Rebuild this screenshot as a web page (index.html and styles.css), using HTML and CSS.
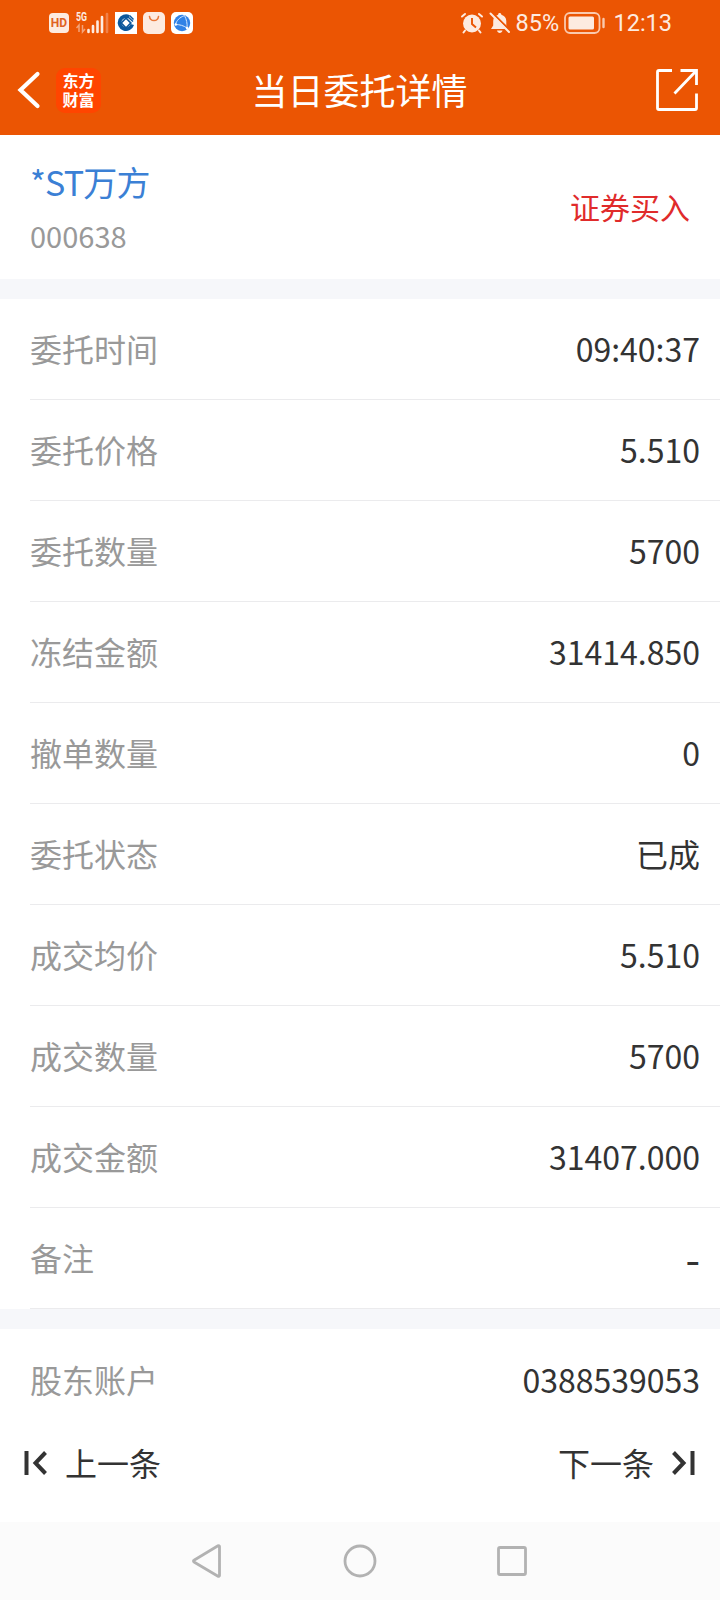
FILE: index.html
```html
<!DOCTYPE html>
<html lang="zh-CN">
<head>
    <meta charset="UTF-8">
    <meta name="viewport" content="width=device-width, initial-scale=1.0">
    <title>当日委托详情</title>
    <link rel="stylesheet" href="styles.css">
</head>
<body>
    <header class="header">
        <!-- Status bar -->
        <div class="status">
            <div class="status-left">
                <span class="hd">HD</span>
                <svg class="signal" width="34" height="24" viewBox="0 0 34 24">
                    <text x="0" y="10" class="signal-text" textLength="11" lengthAdjust="spacingAndGlyphs">5G</text>
                    <path d="M3 21V14l-2.500 3M6.500 14v7l2.500-3" fill="none" stroke="#f3a47b" stroke-width="1.500"/>
                    <path d="M12.500 21v-2M17 21v-6M21.500 21V10.500M26 21V6" stroke="#fdebe0" stroke-width="2.600" stroke-linecap="round"/>
                    <path d="M31 21V3" stroke="#f08149" stroke-width="2.600" stroke-linecap="round"/>
                </svg>
                <svg class="app-bank" width="22" height="22" viewBox="0 0 22 22">
                    <path d="M0 0h22v22H0z" fill="#fff"/>
                    <path d="M14 4.800A6.500 6.500 0 1 0 17.300 12.500" fill="none" stroke="#0b579c" stroke-width="3.600"/>
                    <path d="M11 5l6 6-6 6-6-6z" fill="#0b579c"/>
                    <path d="M11 7.300l3.700 3.700-3.700 3.700L7.300 11z" fill="#fff"/>
                    <path d="M12.500 4.500l5.500 5M14.500 3.500l4 4" stroke="#0b579c" stroke-width="1.500"/>
                </svg>
                <svg class="app-store" width="22" height="22" viewBox="0 0 22 22">
                    <rect width="22" height="22" rx="5" fill="#fdebe0"/>
                    <path d="M6.500 4.500c.8 5.400 8.200 5.400 9 0" fill="none" stroke="#e9783a" stroke-width="1.600" stroke-linecap="round"/>
                </svg>
                <svg class="app-globe" width="22" height="22" viewBox="0 0 22 22">
                    <rect width="22" height="22" rx="5" fill="#fff"/>
                    <circle cx="11" cy="11" r="8.200" fill="#3182e6"/>
                    <path d="M13.500 3.500c-5 2-8 5-9 9M4.500 12.500c4 0 8 1 11.500 3.500M13.500 3.500c2 4 3 8 2.500 12.500" fill="none" stroke="#d5e8ff" stroke-width="1"/>
                    <circle cx="4.800" cy="12.500" r="1.200" fill="#fff"/>
                    <circle cx="16" cy="16" r="1.200" fill="#fff"/>
                </svg>
            </div>
            <div class="status-right">
                <svg class="alarm" width="24" height="22" viewBox="0 0 24 22">
                    <circle cx="12" cy="11.500" r="9" fill="#fdebe0"/>
                    <path d="M2 4.500L5 2M22 4.500L19 2M5 18.500l-1.500 2M19 18.500l1.500 2" stroke="#fdebe0" stroke-width="2" stroke-linecap="round"/>
                    <path d="M12 6v6l4 3.500" fill="none" stroke="#eb5503" stroke-width="1.900"/>
                </svg>
                <svg class="bell" width="22" height="22" viewBox="0 0 22 22">
                    <path d="M10.500 1c1.100 0 1.800.7 1.900 1.700 3 .8 4.900 3.200 4.900 6.300v4.500l2.200 3.500H2l2.200-3.500V9c0-3.100 1.900-5.500 4.900-6.300.1-1 .6-1.700 1.400-1.700zM8 18.500h5.500c-.5 3.300-5 3.300-5.500 0z" fill="#fdebe0"/>
                    <path d="M3 .5l19 19" stroke="#eb5503" stroke-width="2"/>
                    <path d="M1.500 1.500l18.500 18.500" stroke="#fdebe0" stroke-width="2" stroke-linecap="round"/>
                </svg>
                <span class="battery-text">85%</span>
                <svg class="battery" width="42" height="22" viewBox="0 0 42 22">
                    <rect x="1" y="1" width="34.500" height="20" rx="5" fill="none" stroke="#fac9ad" stroke-width="1.800"/>
                    <rect x="4.500" y="4.500" width="25.500" height="13" rx="1.500" fill="#fdebe0"/>
                    <path d="M39.500 7v8" stroke="#fac9ad" stroke-width="2.400" stroke-linecap="round"/>
                </svg>
                <span class="time">12:13</span>
            </div>
        </div>

        <!-- Title bar -->
        <div class="nav">
            <div class="nav-left">
                <svg width="24" height="38" viewBox="0 0 24 38">
                    <path d="M20.500 3L3.500 19l17 16" fill="none" stroke="#fff" stroke-width="4.200" stroke-linecap="round" stroke-linejoin="miter"/>
                </svg>
                <div class="logo"><span>东方</span><span>财富</span></div>
            </div>
            <h1 class="title">当日委托详情</h1>
            <svg class="share" width="44" height="44" viewBox="0 0 44 44">
                <path d="M17 2.500H4a1.500 1.500 0 0 0-1.500 1.500v36A1.500 1.500 0 0 0 4 41.500h36a1.500 1.500 0 0 0 1.500-1.500V25.500M25.500 2.500h16V17M41 3L19.500 25.500" fill="none" stroke="#fff" stroke-width="2.800"/>
            </svg>
        </div>
    </header>

    <section class="stock">
        <div>
            <div class="stock-name">*ST万方</div>
            <div class="stock-code">000638</div>
        </div>
        <div class="side">证券买入</div>
    </section>

    <section class="list">
        <div class="row"><span class="label">委托时间</span><span class="value">09:40:37</span></div>
        <div class="row"><span class="label">委托价格</span><span class="value">5.510</span></div>
        <div class="row"><span class="label">委托数量</span><span class="value">5700</span></div>
        <div class="row"><span class="label">冻结金额</span><span class="value">31414.850</span></div>
        <div class="row"><span class="label">撤单数量</span><span class="value">0</span></div>
        <div class="row"><span class="label">委托状态</span><span class="value">已成</span></div>
        <div class="row"><span class="label">成交均价</span><span class="value">5.510</span></div>
        <div class="row"><span class="label">成交数量</span><span class="value">5700</span></div>
        <div class="row"><span class="label">成交金额</span><span class="value">31407.000</span></div>
        <div class="row"><span class="label">备注</span><span class="value empty">-</span></div>
    </section>

    <section class="account">
        <span class="label">股东账户</span><span class="value">0388539053</span>
    </section>

    <!-- Previous / next -->
    <div class="pager">
        <div class="pager-item">
            <svg width="24" height="26" viewBox="0 0 24 26">
                <path d="M3.500 1v24" stroke="#333" stroke-width="4"/>
                <path d="M22.500 2.500L12.500 13l10 10.500" fill="none" stroke="#333" stroke-width="4"/>
            </svg>
            <span>上一条</span>
        </div>
        <div class="pager-item">
            <span>下一条</span>
            <svg width="24" height="26" viewBox="0 0 24 26">
                <path d="M20.500 1v24" stroke="#333" stroke-width="4"/>
                <path d="M1.500 2.500l10 10.500-10 10.500" fill="none" stroke="#333" stroke-width="4"/>
            </svg>
        </div>
    </div>

    <!-- System navigation -->
    <footer class="system">
        <svg width="34" height="36" viewBox="0 0 34 36">
            <path d="M28.500 3.500v29a1 1 0 0 1-1.500.8L3 19a1 1 0 0 1 0-1.800L27 2.700a1 1 0 0 1 1.500.8z" fill="none" stroke="#b2b2b2" stroke-width="2.800"/>
        </svg>
        <svg width="34" height="36" viewBox="0 0 34 36">
            <circle cx="17" cy="18" r="15" fill="none" stroke="#b2b2b2" stroke-width="2.800"/>
        </svg>
        <svg width="34" height="36" viewBox="0 0 34 36">
            <rect x="3.500" y="4.500" width="27" height="27" rx="1.500" fill="none" stroke="#b2b2b2" stroke-width="2.800"/>
        </svg>
    </footer>
</body>
</html>
```

FILE: styles.css
```css
* {
    box-sizing: border-box;
}

body {
    display: flex;
    flex-direction: column;
    height: 1600px;
    margin: 0;
    background-color: #fff;
    color: #333;
    font-family: "Noto Sans CJK SC", sans-serif;
    font-size: 32px;
    line-height: 1;
}

svg {
    display: block;
    flex: none;
}

.header {
    height: 135px;
    background-color: #eb5503;
    color: #fff;
}

.status {
    display: flex;
    justify-content: space-between;
    height: 46px;
    padding: 0 48px 0 49px;
    color: #fdebe0;
}

.status-left,
.status-right {
    display: flex;
    align-items: center;
}

.hd {
    width: 20px;
    height: 20px;
    border-radius: 4px;
    background-color: #fdebe0;
    color: #e0621f;
    font: bold 12px/20px Roboto, sans-serif;
    text-align: center;
}

.signal {
    margin: 0 5px 0 7px;
}

.signal-text {
    fill: #fdebe0;
    font: bold 12px Roboto, sans-serif;
}

.app-store {
    margin: 0 6px;
}

.bell {
    margin: 0 4px 0 5px;
}

.battery-text,
.time {
    font-family: Roboto, sans-serif;
    font-size: 23.5px;
    padding-top: 2px;
}

.battery-text {
    width: 44px;
    font-size: 23.5px;
}

.battery {
    margin: 0 7px 0 5px;
}

.nav {
    display: grid;
    grid-template-columns: 1fr auto 1fr;
    align-items: center;
    height: 88px;
    padding: 0 20px 0 17px;
}

.nav-left {
    display: flex;
    align-items: center;
    gap: 15px;
}

.logo {
    display: flex;
    flex-direction: column;
    align-items: center;
    justify-content: center;
    gap: 3px;
    width: 45px;
    height: 45px;
    padding-bottom: 2px;
    border-radius: 9px;
    background-color: #ff4500;
    font-size: 16px;
    font-weight: bold;
}

.title {
    margin: 0 -1px 2px 1px;
    font-size: 36px;
    font-weight: 400;
}

.share {
    justify-self: end;
    margin-right: 1px;
}

.stock {
    display: flex;
    justify-content: space-between;
    height: 144px;
    padding: 30px 30px 0;
}

.stock-name {
    color: #3b80d5;
    font-size: 34px;
    letter-spacing: -0.8px;
}

.stock-code {
    margin-top: 22px;
    color: #999;
    font-size: 29px;
}

.side {
    margin-top: 26px;
    color: #e02b2b;
    font-size: 30px;
}

.list {
    border-top: 20px solid #f6f7fa;
    border-bottom: 20px solid #f6f7fa;
}

.row,
.account {
    display: flex;
    align-items: center;
    justify-content: space-between;
    height: 101px;
    margin-left: 30px;
    padding-right: 20px;
    padding-bottom: 2px;
}

.row {
    border-bottom: 1px solid #ebebed;
}

.label {
    color: #999;
}

.empty {
    font-size: 42px;
}

.account {
    height: 101px;
}

.pager {
    display: flex;
    flex: 1;
    align-items: flex-start;
    justify-content: space-between;
    padding: 16px 24px 0 23px;
}

.pager-item {
    display: flex;
    align-items: center;
    gap: 18px;
}

.pager-item span {
    padding-bottom: 1px;
}

.system {
    display: flex;
    align-items: center;
    justify-content: center;
    gap: 118px;
    height: 78px;
    background-color: #fbfbfb;
}
```
